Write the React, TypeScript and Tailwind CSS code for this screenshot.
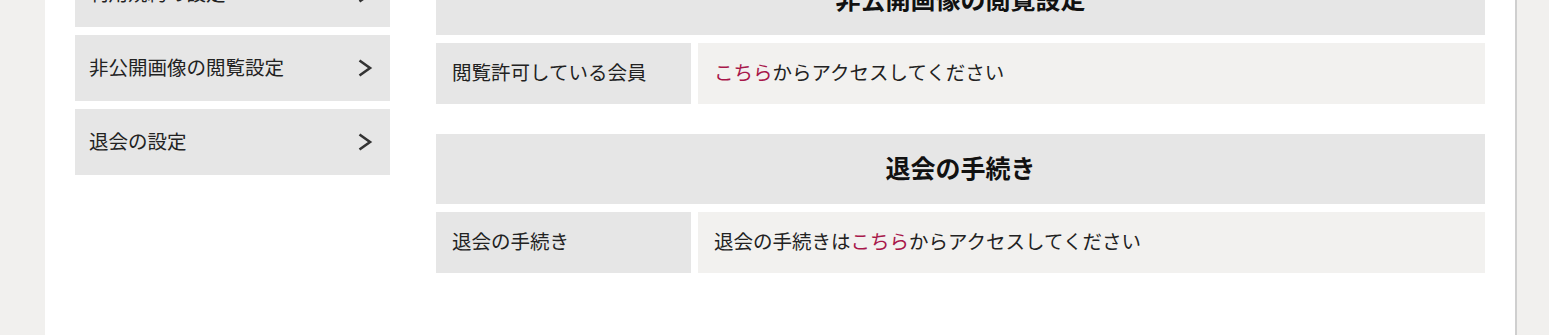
const sideItems = ['利用規約の設定', '非公開画像の閲覧設定', '退会の設定'];

function Chevron() {
  return (
    <svg width="16" height="20" viewBox="0 0 16 20" fill="none" className="text-[#333]">
      <path d="M2.5 2.5 L13 10 L2.5 17.5" stroke="currentColor" strokeWidth="2.6" strokeLinecap="butt" strokeLinejoin="miter" />
    </svg>
  );
}

function SideItem({ label }: { label: string }) {
  return (
    <div className="flex h-[66px] items-center justify-between bg-[#e6e6e6] pl-[14px] pr-[17px]">
      <span className="pb-[3px]">{label}</span>
      <Chevron />
    </div>
  );
}

function Section({
  title,
  label,
  children,
}: {
  title: string;
  label: string;
  children: React.ReactNode;
}) {
  return (
    <section className="flex flex-col gap-[8.3px]">
      <h2 className="flex h-[69.7px] items-center justify-center bg-[#e6e6e6] pb-[2px] text-[25px] font-bold text-[#111]">
        {title}
      </h2>
      <div className="flex h-[60.7px] gap-[7px]">
        <div className="flex w-[255px] shrink-0 items-center bg-[#e6e6e6] px-[16px] pb-[3px]">{label}</div>
        <div className="flex flex-1 items-center bg-[#f2f1ef] px-[16px] pb-[3px]">{children}</div>
      </div>
    </section>
  );
}

const Link = ({ children }: { children: React.ReactNode }) => (
  <a className="text-[#a8174a]">{children}</a>
);

export default function App() {
  return (
    <div
      className="flex h-[335px] overflow-hidden bg-[#f1f0ee] text-[19.5px] text-[#222]"
      style={{ fontFamily: '"Noto Sans CJK JP", "Noto Sans", sans-serif' }}
    >
      <div className="ml-[45px] flex w-[1470px] shrink-0 gap-[46px] overflow-hidden bg-white px-[30px]">
        {/* side menu */}
        <nav className="-mt-[39px] flex w-[315px] shrink-0 flex-col gap-[8px]">
          {sideItems.map((s) => (
            <SideItem key={s} label={s} />
          ))}
        </nav>

        {/* content */}
        <div className="-mt-[35px] flex flex-1 flex-col gap-[30.3px]">
          <Section title="非公開画像の閲覧設定" label="閲覧許可している会員">
            <span>
              <Link>こちら</Link>からアクセスしてください
            </span>
          </Section>
          <Section title="退会の手続き" label="退会の手続き">
            <span>
              退会の手続きは<Link>こちら</Link>からアクセスしてください
            </span>
          </Section>
        </div>
      </div>
      <div className="w-[2px] shrink-0 bg-[#cfcfcf]" />
    </div>
  );
}
